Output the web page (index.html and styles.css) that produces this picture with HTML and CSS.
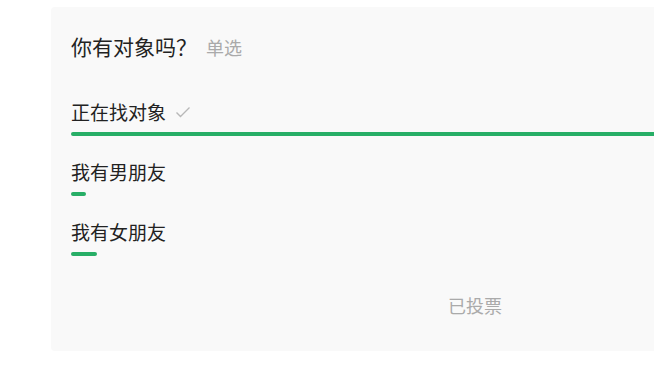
FILE: index.html
```html
<!DOCTYPE html>
<html lang="zh-CN">

<head>
    <meta charset="UTF-8">
    <meta name="viewport" content="width=device-width, initial-scale=1.0">
    <title>投票</title>

    <link rel="stylesheet" href="styles.css">
</head>

<body>
    <div class="vote-card">
        <div class="vote-title">
            你有对象吗？<span class="vote-type">单选</span>
        </div>

        <ul class="vote-options">
            <li class="option">
                <div class="option-label">
                    正在找对象
                    <svg class="check" width="16" height="12" viewBox="0 0 16 12">
                        <path d="M1.5 6.5 L5.5 10.5 L14.5 1.5" fill="none" stroke="#b8b8b8" stroke-width="1.4" />
                    </svg>
                </div>
                <div class="option-bar" style="width: 100%"></div>
            </li>
            <li class="option">
                <div class="option-label">我有男朋友</div>
                <div class="option-bar" style="width: 1.9%"></div>
            </li>
            <li class="option">
                <div class="option-label">我有女朋友</div>
                <div class="option-bar" style="width: 3.2%"></div>
            </li>
        </ul>

        <div class="vote-status">已投票</div>
    </div>
</body>

</html>
```

FILE: styles.css
```css
/* Global reset */

* {
    margin: 0;
    padding: 0;
    box-sizing: border-box;
}

body {
    font-family: "Microsoft YaHei", "Noto Sans CJK SC", "Noto Sans", sans-serif;
    background-color: #fff;
    color: #222;
    overflow: hidden;
}

.vote-card {
    width: 848px;
    margin: 7px 0 0 51px;
    padding: 26px 20px 35px 20px;
    background-color: #f9f9f9;
    border-radius: 4px;
}

.vote-title {
    font-size: 21px;
    line-height: 26px;
    color: #222;
}

.vote-type {
    font-size: 18px;
    color: #aaa;
    margin-left: 9px;
}

.vote-options {
    list-style: none;
    margin-top: 40px;
}

.option {
    margin-bottom: 24px;
}

.option:last-child {
    margin-bottom: 0;
}

.option-label {
    display: flex;
    align-items: center;
    font-size: 19px;
    line-height: 24px;
    color: #222;
}

.check {
    margin-left: 9px;
}

.option-bar {
    height: 4px;
    margin-top: 8px;
    background-color: #27ae66;
    border-radius: 2px;
}

.vote-status {
    margin-top: 38px;
    text-align: center;
    font-size: 18px;
    line-height: 22px;
    color: #aaa;
}
```
